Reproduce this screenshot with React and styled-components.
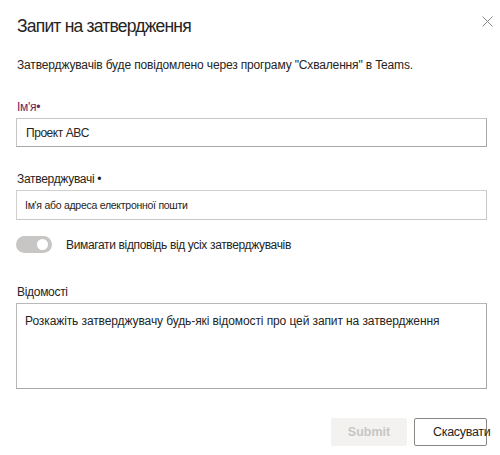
import React from "react";
import styled, { createGlobalStyle } from "styled-components";

const Global = createGlobalStyle`
  html, body { margin: 0; padding: 0; background: #ffffff; }
  body { font-family: "Liberation Sans", Arial, sans-serif; color: #252423; }
  * { box-sizing: border-box; }
`;

const Dialog = styled.div`
  position: relative;
  width: 500px;
  height: 455px;
  padding: 14px 13px 0 16px;
  display: flex;
  flex-direction: column;
`;

const Title = styled.h1`
  margin: 0 0 0 1px;
  font-size: 17.5px;
  font-weight: 400;
  letter-spacing: -0.8px;
  line-height: 24px;
  color: #252423;
`;

const Close = styled.button`
  position: absolute;
  top: 14px;
  right: 6px;
  width: 14px;
  height: 14px;
  padding: 0;
  border: 0;
  background: none;
  display: flex;
  align-items: center;
  justify-content: center;
`;

const Intro = styled.p`
  margin: 19px 0 0 1px;
  font-size: 12px;
  letter-spacing: -0.15px;
  line-height: 16px;
  color: #252423;
`;

const Field = styled.div`
  display: flex;
  flex-direction: column;
  margin-top: ${(p) => p.$gap}px;
`;

const Label = styled.label`
  margin-left: 1px;
  font-size: 12px;
  letter-spacing: -0.3px;
  line-height: 16px;
  color: ${(p) => (p.$accent ? "#6b2660" : "#252423")};
  margin-bottom: 3px;
`;

const Input = styled.div`
  height: ${(p) => p.$h}px;
  border: 1px solid ${(p) => p.$line};
  border-right-color: ${(p) => p.$edge};
  border-bottom-color: ${(p) => p.$edge};
  display: flex;
  align-items: center;
  padding-left: ${(p) => p.$pad}px;
  font-size: ${(p) => p.$size}px;
  letter-spacing: ${(p) => p.$track}px;
  color: #252423;
  background: #fff;
`;

const Area = styled.div`
  height: 86px;
  border: 1px solid #a8a8a8;
  border-top-color: #b8b8b8;
  border-left-color: #b8b8b8;
  padding: 9px 0 0 8px;
  font-size: 12px;
  letter-spacing: -0.1px;
  line-height: 16px;
  color: #252423;
`;

const ToggleRow = styled.div`
  display: flex;
  align-items: center;
  gap: 14px;
  margin-top: 16px;
`;

const Track = styled.span`
  width: 36px;
  height: 17px;
  border-radius: 9px;
  background: #c8c6c4;
  display: flex;
  align-items: center;
  justify-content: flex-end;
  padding-right: 4px;
`;

const Thumb = styled.span`
  width: 11px;
  height: 11px;
  border-radius: 50%;
  background: #ffffff;
`;

const ToggleText = styled.span`
  font-size: 12px;
  letter-spacing: -0.35px;
  color: #252423;
`;

const Footer = styled.div`
  display: flex;
  justify-content: flex-end;
  gap: 7px;
  margin-top: 29px;
`;

const Button = styled.button`
  height: 28px;
  width: ${(p) => p.$w}px;
  padding: 0 0 0 ${(p) => p.$pad}px;
  font-family: inherit;
  font-size: 12.5px;
  white-space: nowrap;
  display: flex;
  align-items: center;
  justify-content: ${(p) => (p.$primary ? "center" : "flex-start")};
  overflow: visible;
  border-radius: 2px;
  ${(p) =>
    p.$primary
      ? `background: #f3f2f1; color: #c8c6c4; border: 0; font-weight: 700;`
      : `background: #ffffff; color: #252423; border: 1px solid #8a8886; letter-spacing: -0.3px;`}
`;

export default function App() {
  return (
    <>
      <Global />
      <Dialog>
        <Title>Запит на затвердження</Title>
        <Close aria-label="Закрити">
          <svg width="11" height="11" viewBox="0 0 11 11">
            <path d="M0.5 0.5 L10.5 10.5 M10.5 0.5 L0.5 10.5" stroke="#8a8886" strokeWidth="1" />
          </svg>
        </Close>
        <Intro>Затверджувачів буде повідомлено через програму "Схвалення" в Teams.</Intro>

        <Field $gap={26}>
          <Label $accent>Ім'я•</Label>
          <Input $h={29} $line="#c8c6c4" $edge="#a8a8a8" $pad={9} $size={12} $track={-0.45}>
            Проект ABC
          </Input>
        </Field>

        <Field $gap={24}>
          <Label>Затверджувачі •</Label>
          <Input $h={30} $line="#d2d0ce" $edge="#c8c6c4" $pad={8} $size={10.5} $track={-0.27}>
            Ім'я або адреса електронної пошти
          </Input>
        </Field>

        <ToggleRow>
          <Track>
            <Thumb />
          </Track>
          <ToggleText>Вимагати відповідь від усіх затверджувачів</ToggleText>
        </ToggleRow>

        <Field $gap={31}>
          <Label>Відомості</Label>
          <Area>Розкажіть затверджувачу будь-які відомості про цей запит на затвердження</Area>
        </Field>

        <Footer>
          <Button $primary $w={76} $pad={0}>Submit</Button>
          <Button $w={73} $pad={18}>Скасувати</Button>
        </Footer>
      </Dialog>
    </>
  );
}
